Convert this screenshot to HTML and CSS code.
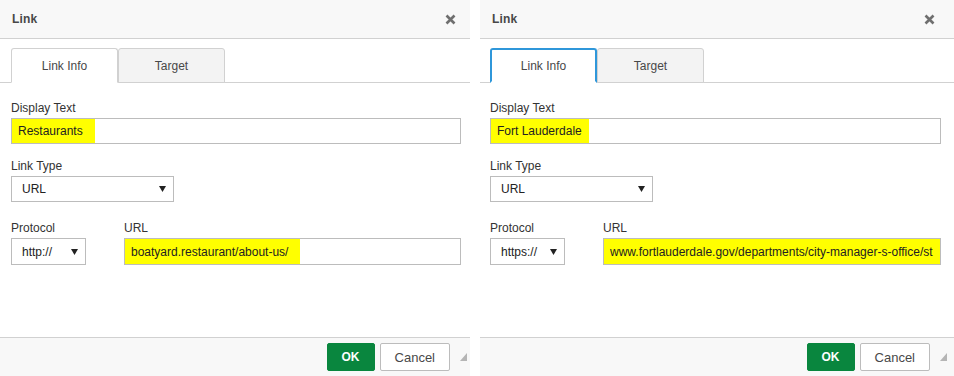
FILE: index.html
```html
<!DOCTYPE html>
<html lang="en">
<head>
  <meta charset="UTF-8" />
  <title>Link dialogs</title>
  <link rel="stylesheet" href="styles.css">
</head>
<body>
  <div class="screen">

    <!-- Dialog 1 -->
    <div class="dialog">
      <div class="dialog-header">
        <span class="dialog-title">Link</span>
        <svg class="dialog-close" width="11" height="11" viewBox="0 0 11 11"><path d="M1.5 1.5 L9.5 9.5 M9.5 1.5 L1.5 9.5" stroke="#6f6f6f" stroke-width="2.6"/></svg>
      </div>
      <div class="tabs">
        <span class="tab tab-selected">Link Info</span>
        <span class="tab">Target</span>
      </div>
      <div class="dialog-body">
        <div class="field">
          <div class="field-label">Display Text</div>
          <div class="text-input"><span class="mark">Restaurants</span></div>
        </div>
        <div class="field field-spaced">
          <div class="field-label">Link Type</div>
          <div class="select select-type"><span>URL</span><svg width="7" height="6" viewBox="0 0 7 6"><polygon points="0,0 7,0 3.5,6" fill="#222"/></svg></div>
        </div>
        <div class="field-row">
          <div class="field">
            <div class="field-label">Protocol</div>
            <div class="select select-protocol"><span>http://</span><svg width="7" height="6" viewBox="0 0 7 6"><polygon points="0,0 7,0 3.5,6" fill="#222"/></svg></div>
          </div>
          <div class="field field-url">
            <div class="field-label">URL</div>
            <div class="text-input text-input-tall"><span class="mark">boatyard.restaurant/about-us/</span></div>
          </div>
        </div>
      </div>
      <div class="dialog-footer">
        <span class="btn btn-ok">OK</span>
        <span class="btn">Cancel</span>
        <svg class="grip" width="7" height="8" viewBox="0 0 7 8"><polygon points="7,0 7,8 0,8" fill="#b5b5b5"/></svg>
      </div>
    </div>

    <!-- Dialog 2 -->
    <div class="dialog dialog-wide">
      <div class="dialog-header">
        <span class="dialog-title">Link</span>
        <svg class="dialog-close" width="11" height="11" viewBox="0 0 11 11"><path d="M1.5 1.5 L9.5 9.5 M9.5 1.5 L1.5 9.5" stroke="#6f6f6f" stroke-width="2.6"/></svg>
      </div>
      <div class="tabs">
        <span class="tab tab-selected tab-focus">Link Info</span>
        <span class="tab">Target</span>
      </div>
      <div class="dialog-body">
        <div class="field">
          <div class="field-label">Display Text</div>
          <div class="text-input"><span class="mark mark-short">Fort Lauderdale</span></div>
        </div>
        <div class="field field-spaced">
          <div class="field-label">Link Type</div>
          <div class="select select-type"><span>URL</span><svg width="7" height="6" viewBox="0 0 7 6"><polygon points="0,0 7,0 3.5,6" fill="#222"/></svg></div>
        </div>
        <div class="field-row">
          <div class="field">
            <div class="field-label">Protocol</div>
            <div class="select select-protocol"><span>https://</span><svg width="7" height="6" viewBox="0 0 7 6"><polygon points="0,0 7,0 3.5,6" fill="#222"/></svg></div>
          </div>
          <div class="field field-url">
            <div class="field-label">URL</div>
            <div class="text-input text-input-tall text-input-marked">www.fortlauderdale.gov/departments/city-manager-s-office/st</div>
          </div>
        </div>
      </div>
      <div class="dialog-footer">
        <span class="btn btn-ok">OK</span>
        <span class="btn">Cancel</span>
        <svg class="grip" width="7" height="8" viewBox="0 0 7 8"><polygon points="7,0 7,8 0,8" fill="#b5b5b5"/></svg>
      </div>
    </div>

  </div>
</body>
</html>
```

FILE: styles.css
```css
* {
  margin: 0;
  padding: 0;
  box-sizing: border-box;
}

body {
  font-family: 'Liberation Sans', Arial, sans-serif;
  font-size: 12px;
  color: #222;
  background: #fff;
  height: 376px;
  overflow: hidden;
}

.screen {
  display: flex;
  gap: 10px;
  height: 376px;
}

/* Dialog */
.dialog {
  width: 470px;
  height: 100%;
  display: flex;
  flex-direction: column;
}

.dialog-wide {
  width: 474px;
}

.dialog-header {
  height: 39px;
  display: flex;
  align-items: center;
  justify-content: space-between;
  padding: 0 14px 0 12px;
  background: #f8f8f8;
  border-bottom: 1px solid #d1d1d1;
}

.dialog-title {
  font-weight: bold;
  color: #484848;
  letter-spacing: 0.2px;
}

.dialog-close {
  display: block;
  margin-top: 1px;
}

/* Tabs */
.tabs {
  display: flex;
  margin-top: 9px;
  padding-left: 11px;
  border-bottom: 1px solid #d1d1d1;
}

.tab {
  width: 107px;
  height: 35px;
  margin-bottom: -1px;
  line-height: 34px;
  text-align: center;
  color: #484848;
  background: #f3f3f3;
  border: 1px solid #d1d1d1;
  border-radius: 3px 3px 0 0;
}

.tab-selected {
  background: #fff;
  border-bottom-color: #fff;
}

.tab-focus {
  border: 2px solid #2f97da;
  border-bottom-color: #fff;
  line-height: 32px;
}

/* Form */
.dialog-body {
  padding: 17px 9px 0 11px;
}

.field {
  min-width: 0;
}

.field-label {
  line-height: 16px;
  margin-bottom: 2px;
  color: #333;
}

.field-spaced {
  margin-top: 14px;
}

.field-row {
  display: flex;
  margin-top: 18px;
}

.field-url {
  flex: 1;
  margin-left: 38px;
}

.text-input {
  height: 26px;
  display: flex;
  align-items: stretch;
  border: 1px solid #bcbcbc;
  background: #fff;
  white-space: nowrap;
  overflow: hidden;
}

.text-input-tall {
  height: 27px;
}

.text-input-marked {
  background: #ffff00;
  align-items: center;
  padding-left: 6px;
}

.mark {
  display: flex;
  align-items: center;
  padding: 0 12px 0 6px;
  background: #ffff00;
}

.mark-short {
  padding-right: 7px;
}

.select {
  height: 26px;
  display: flex;
  align-items: center;
  justify-content: space-between;
  padding: 0 7px 0 10px;
  border: 1px solid #bcbcbc;
  background: #fff;
}

.select svg {
  display: block;
}

.select-type {
  width: 163px;
}

.select-protocol {
  width: 75px;
  height: 27px;
}

/* Footer */
.dialog-footer {
  margin-top: auto;
  height: 39px;
  display: flex;
  justify-content: flex-end;
  align-items: flex-start;
  padding: 5px 3px 0 0;
  background: #f8f8f8;
  border-top: 1px solid #d1d1d1;
}

.btn {
  height: 28px;
  display: flex;
  align-items: center;
  padding: 0 14px;
  margin-left: 5px;
  font-size: 13px;
  color: #484848;
  background: #fff;
  border: 1px solid #bcbcbc;
  border-radius: 2px;
}

.btn-ok {
  font-size: 12px;
  font-weight: bold;
  color: #fff;
  background: #09863e;
  border-color: #09863e;
}

.grip {
  display: block;
  margin: 10px 0 0 10px;
}

/* Second dialog runs past the window edge */
.dialog-wide .dialog-header {
  padding-right: 19px;
}

.dialog-wide .tabs {
  padding-left: 10px;
}

.dialog-wide .dialog-body {
  padding-left: 10px;
  padding-right: 13px;
}

.dialog-wide .dialog-footer {
  padding-right: 7px;
}
```
